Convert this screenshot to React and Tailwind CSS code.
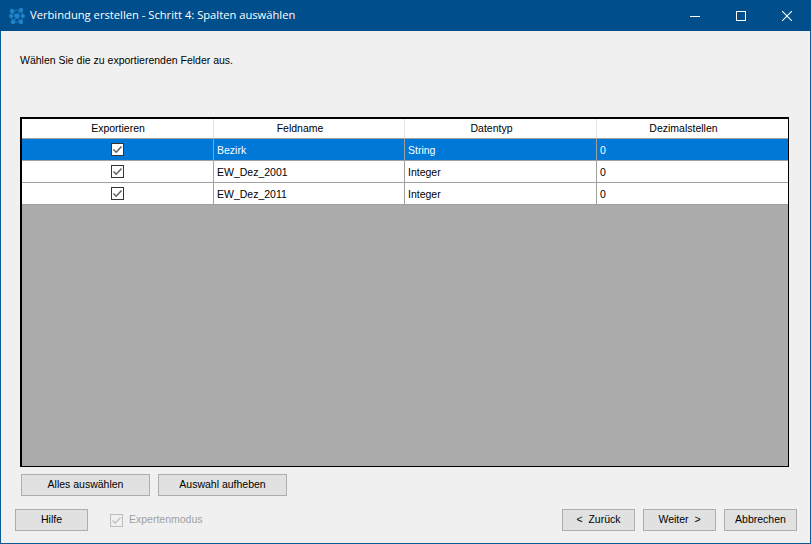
import React from 'react';

const rows = [
  { name: 'Bezirk', type: 'String', selected: true },
  { name: 'EW_Dez_2001', type: 'Integer' },
  { name: 'EW_Dez_2011', type: 'Integer' }
];

const columns = 'grid grid-cols-[192px_191px_192px_191px]';

const CheckBox = ({ disabled }) => (
  <span
    className={`flex h-[13px] w-[13px] items-center justify-center border ${
      disabled ? 'border-[#bcbcbc] bg-transparent' : 'border-[#333333] bg-white'
    }`}
  >
    <svg viewBox="0 0 11 11" className="h-[11px] w-[11px]">
      <path d="M1.5 5.5 L4.2 8.2 L9.5 2.5" fill="none" stroke={disabled ? '#c4c4c4' : '#606060'} strokeWidth="1.5" />
    </svg>
  </span>
);

const Button = ({ width, children }) => (
  <button className={`flex h-[22px] ${width} items-center justify-center border border-[#adadad] bg-[#e1e1e1] text-black`}>
    {children}
  </button>
);

const Logo = () => (
  <svg viewBox="0 0 18 18" className="h-[18px] w-[18px]">
    <g stroke="#1a6fb0" strokeWidth="1.6" fill="none">
      <path d="M4 4 L13 3 L15 9 L13 15 L5 15 L3 9 Z M4 4 L13 15 M13 3 L5 15 M3 9 L15 9" />
    </g>
    <g fill="#1f84cc">
      <circle cx="4" cy="4" r="2.2" />
      <circle cx="13" cy="3" r="2.2" />
      <circle cx="15" cy="9" r="2" />
      <circle cx="13" cy="15" r="2.2" />
      <circle cx="5" cy="15" r="2.2" />
      <circle cx="3" cy="9" r="2" />
      <circle cx="9" cy="9" r="2.4" />
    </g>
  </svg>
);

const App = () => {
  return (
    <div className="flex h-[544px] w-[811px] flex-col border border-t-0 border-[#0e5a94] bg-[#f0f0f0] font-['Liberation_Sans',sans-serif] text-[10.5px] text-black">
      <div className="-mx-px flex h-[31px] shrink-0 items-center justify-between bg-[#004e8c] pl-[8px] text-white">
        <div className="flex items-center gap-[4px]">
          <Logo />
          <span className="font-['Open_Sans',sans-serif] text-[11.2px]">Verbindung erstellen - Schritt 4: Spalten auswählen</span>
        </div>
        <div className="mr-px flex items-center">
          <span className="flex h-[31px] w-[46px] items-center justify-center">
            <svg viewBox="0 0 10 10" className="h-[10px] w-[10px]" shapeRendering="crispEdges">
              <path d="M0 5.5 H10" stroke="white" fill="none" />
            </svg>
          </span>
          <span className="flex h-[31px] w-[46px] items-center justify-center">
            <svg viewBox="0 0 10 10" className="h-[10px] w-[10px]" shapeRendering="crispEdges">
              <rect x="0.5" y="0.5" width="9" height="9" stroke="white" fill="none" />
            </svg>
          </span>
          <span className="flex h-[31px] w-[46px] items-center justify-center">
            <svg viewBox="0 0 10 10" className="h-[10px] w-[10px]">
              <path d="M0 0 L10 10 M10 0 L0 10" stroke="white" strokeWidth="1.1" fill="none" />
            </svg>
          </span>
        </div>
      </div>

      <p className="pl-[19px] pt-[22px] leading-[14px]">Wählen Sie die zu exportierenden Felder aus.</p>

      <div className="ml-[19px] mt-[50px] flex h-[350px] w-[769px] flex-col border-2 border-b border-r border-black bg-[#ababab]">
        <div className={`${columns} h-[19px] bg-white`}>
          <div className="flex items-center justify-center border-r border-[#e3e3e3] pl-px pt-px">Exportieren</div>
          {['Feldname', 'Datentyp', 'Dezimalstellen'].map((title) => (
            <div key={title} className="flex items-center justify-center border-r border-[#e3e3e3] pr-[18px] pt-px last:border-r-0">
              {title}
            </div>
          ))}
        </div>
        <div className="h-px bg-[#a0a0a0]" />
        {rows.map((row) => (
          <div
            key={row.name}
            className={`${columns} h-[22px] border-b border-[#a0a0a0] ${row.selected ? 'bg-[#0078d7] text-white' : 'bg-white'}`}
          >
            <div className="flex items-center justify-center border-r border-[#a0a0a0]">
              <CheckBox />
            </div>
            <div className="flex items-center border-r border-[#a0a0a0] pl-[3px] pt-[2px]">{row.name}</div>
            <div className="flex items-center border-r border-[#a0a0a0] pl-[3px] pt-[2px]">{row.type}</div>
            <div className="flex items-center pl-[3px] pt-[2px]">0</div>
          </div>
        ))}
      </div>

      <div className="ml-[20px] mt-[7px] flex gap-[8px]">
        <Button width="w-[129px]">Alles auswählen</Button>
        <Button width="w-[129px]">Auswahl aufheben</Button>
      </div>

      <div className="ml-[14px] mr-[13px] mt-[13px] flex items-center justify-between">
        <div className="flex items-center">
          <Button width="w-[73px]">Hilfe</Button>
          <div className="ml-[22px] flex items-center gap-[6px] text-[#a0a0a0]">
            <CheckBox disabled />
            <span>Expertenmodus</span>
          </div>
        </div>
        <div className="flex gap-[8px]">
          <Button width="w-[73px]">&lt;&nbsp;&nbsp;Zurück</Button>
          <Button width="w-[73px]">Weiter&nbsp;&nbsp;&gt;</Button>
          <Button width="w-[73px]">Abbrechen</Button>
        </div>
      </div>
    </div>
  );
};

export default App;
